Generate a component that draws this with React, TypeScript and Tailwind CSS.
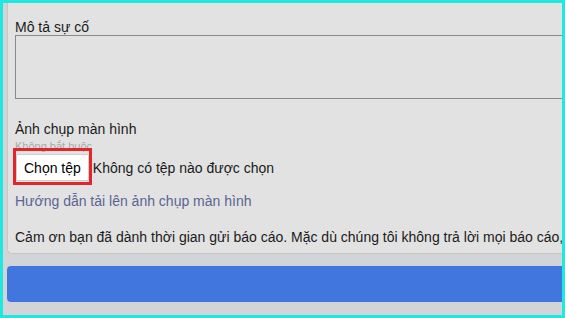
const App = () => {
  return (
    <div className="w-[565px] h-[318px] overflow-hidden border-[3px] border-[#1ee8e0] bg-[#d3d4d8] font-['Liberation_Sans',Arial,sans-serif] text-[#1a1a1a]">
      <div className="flex flex-col w-[600px] ml-[4px]">
        <div className="flex flex-col bg-[#e2e2e2] border-l border-b border-[#c6c6c6] rounded-bl-[5px] pl-[7px] pt-[16px] pb-[8px]">
          <label className="text-[14px] leading-[16px]">Mô tả sự cố</label>
          <textarea className="h-[64px] w-[590px] border border-[#8a8a8a] bg-[#e2e2e2] resize-none outline-none" />
          <label className="mt-[22px] text-[14px] leading-[16px]">Ảnh chụp màn hình</label>
          <span className="mt-[3px] text-[11px] leading-[13px] text-[#a9a9a9]">Không bắt buộc</span>
          <div className="relative mt-[1px] flex items-center h-[27px]">
            <button className="h-[27px] px-[7px] ml-[1px] bg-white border border-[#cfcfcf] rounded-[2px] text-[14px] leading-[16px] text-black">
              Chọn tệp
            </button>
            <span className="ml-[4px] text-[14px] leading-[16px]">Không có tệp nào được chọn</span>
            <div className="absolute left-[-2px] top-[-6px] w-[79px] h-[37px] border-[3px] border-[#e3262b]" />
          </div>
          <a className="mt-[12px] text-[14px] leading-[16px] text-[#5a6494]">Hướng dẫn tải lên ảnh chụp màn hình</a>
          <p className="mt-[20px] text-[14px] leading-[16px] whitespace-nowrap">
            Cảm ơn bạn đã dành thời gian gửi báo cáo. Mặc dù chúng tôi không trả lời mọi báo cáo,
          </p>
        </div>
        <div className="mt-[12px] h-[36px] bg-[#4176df] rounded-l-[4px]" />
      </div>
    </div>
  );
};

export default App;
